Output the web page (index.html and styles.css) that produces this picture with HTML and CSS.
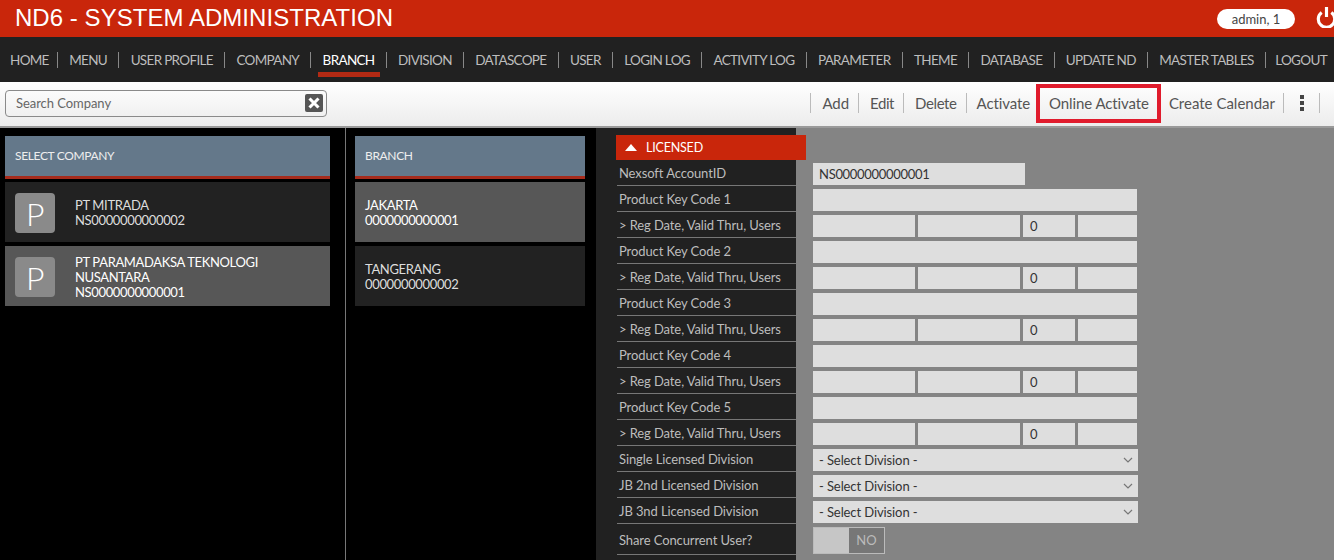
FILE: index.html
```html
<!DOCTYPE html>
<html lang="en">
<head>
    <meta charset="UTF-8">
    <meta name="viewport" content="width=device-width, initial-scale=1.0">
    <title>ND6 - System Administration</title>
    <link rel="stylesheet" href="styles.css">
</head>
<body>
    <header class="topbar">
        <h1 class="app-title">ND6 - SYSTEM ADMINISTRATION</h1>
        <span class="user-pill">admin, 1</span>
        <svg class="power" viewBox="0 0 20 20" width="21" height="21"><path d="M5.4 5.2a7.8 7.8 0 1 0 9.2 0" fill="none" stroke="#fff" stroke-width="3"/><path d="M10 0v9.5" fill="none" stroke="#fff" stroke-width="3"/></svg>
    </header>

    <nav class="mainnav">
        <a>HOME</a>
        <a>MENU</a>
        <a>USER PROFILE</a>
        <a>COMPANY</a>
        <a class="active">BRANCH</a>
        <a>DIVISION</a>
        <a>DATASCOPE</a>
        <a>USER</a>
        <a>LOGIN LOG</a>
        <a>ACTIVITY LOG</a>
        <a>PARAMETER</a>
        <a>THEME</a>
        <a>DATABASE</a>
        <a>UPDATE ND</a>
        <a>MASTER TABLES</a>
        <a>LOGOUT</a>
    </nav>

    <div class="toolbar">
        <div class="search">
            <span>Search Company</span>
            <svg class="search-clear" viewBox="0 0 14 14" width="18" height="18"><rect width="14" height="14" rx="1.5" fill="#555"/><path d="M3.5 3.5l7 7M10.5 3.5l-7 7" stroke="#fff" stroke-width="2.4"/></svg>
        </div>
        <div class="actions">
            <a>Add</a>
            <a class="tight">Edit</a>
            <a class="tight">Delete</a>
            <a class="activate">Activate</a>
            <a class="highlight">Online Activate</a>
            <a>Create Calendar</a>
            <a class="more"><i></i><i></i><i></i></a>
        </div>
    </div>

    <main class="content">
        <section class="col-company">
            <div class="list-head">SELECT COMPANY</div>
            <div class="list-item">
                <span class="avatar">P</span>
                <div>PT MITRADA<br>NS0000000000002</div>
            </div>
            <div class="list-item selected">
                <span class="avatar">P</span>
                <div>PT PARAMADAKSA TEKNOLOGI<br>NUSANTARA<br>NS0000000000001</div>
            </div>
        </section>

        <section class="col-branch">
            <div class="list-head">BRANCH</div>
            <div class="list-item selected">
                <div>JAKARTA<br>0000000000001</div>
            </div>
            <div class="list-item">
                <div>TANGERANG<br>0000000000002</div>
            </div>
        </section>

        <section class="col-form">
            <div class="form-labels">
                <div class="licensed"><span class="arrow"></span>LICENSED</div>
                <div class="label">Nexsoft AccountID</div>
                <div class="label">Product Key Code 1</div>
                <div class="label">&gt; Reg Date, Valid Thru, Users</div>
                <div class="label">Product Key Code 2</div>
                <div class="label">&gt; Reg Date, Valid Thru, Users</div>
                <div class="label">Product Key Code 3</div>
                <div class="label">&gt; Reg Date, Valid Thru, Users</div>
                <div class="label">Product Key Code 4</div>
                <div class="label">&gt; Reg Date, Valid Thru, Users</div>
                <div class="label">Product Key Code 5</div>
                <div class="label">&gt; Reg Date, Valid Thru, Users</div>
                <div class="label">Single Licensed Division</div>
                <div class="label">JB 2nd Licensed Division</div>
                <div class="label">JB 3nd Licensed Division</div>
                <div class="label label-tall">Share Concurrent User?</div>
            </div>
            <div class="form-fields">
                <div class="row"><div class="field account">NS0000000000001</div></div>
                <div class="row"><div class="field wide"></div></div>
                <div class="row"><div class="field date"></div><div class="field date"></div><div class="field users">0</div><div class="field extra"></div></div>
                <div class="row"><div class="field wide"></div></div>
                <div class="row"><div class="field date"></div><div class="field date"></div><div class="field users">0</div><div class="field extra"></div></div>
                <div class="row"><div class="field wide"></div></div>
                <div class="row"><div class="field date"></div><div class="field date"></div><div class="field users">0</div><div class="field extra"></div></div>
                <div class="row"><div class="field wide"></div></div>
                <div class="row"><div class="field date"></div><div class="field date"></div><div class="field users">0</div><div class="field extra"></div></div>
                <div class="row"><div class="field wide"></div></div>
                <div class="row"><div class="field date"></div><div class="field date"></div><div class="field users">0</div><div class="field extra"></div></div>
                <div class="row"><div class="field select">- Select Division -<svg viewBox="0 0 10 6" width="10" height="6"><path d="M1 1l4 4 4-4" fill="none" stroke="#777" stroke-width="1.2"/></svg></div></div>
                <div class="row"><div class="field select">- Select Division -<svg viewBox="0 0 10 6" width="10" height="6"><path d="M1 1l4 4 4-4" fill="none" stroke="#777" stroke-width="1.2"/></svg></div></div>
                <div class="row"><div class="field select">- Select Division -<svg viewBox="0 0 10 6" width="10" height="6"><path d="M1 1l4 4 4-4" fill="none" stroke="#777" stroke-width="1.2"/></svg></div></div>
                <div class="row"><div class="toggle"><span class="toggle-off"></span><span class="toggle-no">NO</span></div></div>
            </div>
        </section>
    </main>
</body>
</html>
```

FILE: styles.css
```css
* {
    margin: 0;
    padding: 0;
    box-sizing: border-box;
}

html, body {
    height: 560px;
    overflow: hidden;
}

body {
    background: #000;
    font-family: "Lato", "Liberation Sans", sans-serif;
    font-size: 14px;
    display: flex;
    flex-direction: column;
}

/* barra vermelha */
.topbar {
    height: 37px;
    background: #c9260b;
    display: flex;
    align-items: center;
    padding: 0 0 0 15px;
    flex-shrink: 0;
    overflow: hidden;
}

.app-title {
    font-family: "Liberation Sans", sans-serif;
    font-size: 24px;
    font-weight: 400;
    letter-spacing: 0.04px;
    color: #fff;
    flex: 1;
    padding-bottom: 2px;
}

.user-pill {
    width: 78px;
    height: 20px;
    border-radius: 10px;
    background: #fff;
    color: #444;
    font-size: 13px;
    text-align: center;
    line-height: 20px;
}

.power {
    margin: -2px -3px 0 21px;
    flex-shrink: 0;
}

/* menu principal */
.mainnav {
    height: 45px;
    background: #212121;
    display: flex;
    align-items: center;
    padding: 0 7px 0 10px;
    flex-shrink: 0;
}

.mainnav a {
    flex: 1 1 auto;
    text-align: center;
    color: #bdbdbd;
    font-size: 13.5px;
    letter-spacing: -0.68px;
    position: relative;
    line-height: 16px;
    white-space: nowrap;
}

.mainnav a:first-child {
    flex: 0 0 47px;
    text-align: left;
}

.mainnav a:last-child {
    flex: 0 0 62px;
    text-align: right;
}

.mainnav a + a {
    border-left: 1px solid #888;
}

.mainnav a.active {
    color: #fff;
}

.mainnav a.active::after {
    content: "";
    position: absolute;
    left: 7px;
    right: 6px;
    top: 20px;
    height: 5px;
    background: #b32a14;
}

/* toolbar */
.toolbar {
    height: 46px;
    background: linear-gradient(#fff, #ececec);
    display: flex;
    align-items: center;
    justify-content: space-between;
    padding: 0 0 2px 5px;
    flex-shrink: 0;
    border-bottom: 2px solid #9a9a9a;
}

.search {
    width: 322px;
    height: 27px;
    border: 1px solid #8a8a8a;
    border-radius: 4px;
    display: flex;
    align-items: center;
    justify-content: space-between;
    padding: 0 3px 0 10px;
    color: #666;
    font-size: 13px;
    letter-spacing: -0.05px;
}

.actions {
    display: flex;
    align-items: center;
    margin-right: 14px;
}

.actions a {
    color: #555;
    font-size: 15px;
    letter-spacing: -0.1px;
    line-height: 20px;
    height: 20px;
    padding: 0 9px 0 11px;
    border-left: 1px solid #bbb;
    white-space: nowrap;
}

.actions a.tight {
    letter-spacing: -0.4px;
}

.actions a.activate {
    padding-left: 10px;
}

.actions .highlight {
    border: 4px solid #e01b2c;
    height: 39px;
    line-height: 31px;
    padding: 0 8px 0 9px;
    margin: 0 8px 0 -3px;
}

.actions .highlight + a {
    border-left: 0;
    letter-spacing: 0;
    padding: 0 8px 0 0;
}

.actions .more {
    display: flex;
    flex-direction: column;
    align-items: center;
    justify-content: center;
    gap: 2px;
    width: 37px;
    border-right: 1px solid #bbb;
    padding: 0;
}

.more i {
    width: 4px;
    height: 4px;
    background: #444;
}

/* colunas */
.content {
    flex: 1;
    display: flex;
    min-height: 0;
}

.col-company {
    width: 346px;
    padding: 8px 15px 0 5px;
    border-right: 1px solid #777;
}

.col-branch {
    width: 250px;
    padding: 8px 11px 0 9px;
}

.list-head {
    height: 43px;
    background: #64788a;
    border-bottom: 3px solid #a62b1c;
    color: #eee;
    font-size: 12px;
    letter-spacing: -0.35px;
    display: flex;
    align-items: center;
    padding: 0 0 2px 10px;
    margin-bottom: 3px;
}

.list-item {
    height: 60px;
    background: #222;
    color: #ddd;
    font-size: 13px;
    line-height: 15px;
    letter-spacing: -0.35px;
    display: flex;
    align-items: center;
    margin-bottom: 4px;
    padding: 2px 0 0 10px;
}

.list-item.selected {
    background: #575757;
    color: #fff;
}

.avatar {
    width: 40px;
    height: 40px;
    border-radius: 4px;
    background: #8a8a8a;
    color: #fff;
    font-size: 32px;
    font-weight: 300;
    display: flex;
    align-items: center;
    justify-content: center;
    margin-right: 20px;
    flex-shrink: 0;
}

/* formulario */
.col-form {
    flex: 1;
    display: flex;
    background: #848484;
    min-width: 0;
}

.form-labels {
    width: 200px;
    flex-shrink: 0;
    background: #212121;
    padding: 7px 0 0 21px;
}

.licensed {
    width: 190px;
    height: 25px;
    margin-left: -1px;
    background: #c9260b;
    color: #fff;
    font-size: 12.5px;
    letter-spacing: -0.2px;
    display: flex;
    align-items: center;
    position: relative;
    z-index: 1;
}

.arrow {
    width: 0;
    height: 0;
    border-left: 6px solid transparent;
    border-right: 6px solid transparent;
    border-bottom: 7px solid #fff;
    margin: 0 9px 0 9px;
}

.label {
    height: 26px;
    padding-left: 2px;
    color: #bdbdbd;
    font-size: 13px;
    letter-spacing: -0.1px;
    line-height: 27px;
    border-bottom: 1px solid #777;
    white-space: nowrap;
}

.label-tall {
    height: 31px;
    line-height: 33px;
}

.form-fields {
    padding: 35px 0 0 17px;
}

.row {
    display: flex;
    gap: 3px;
    height: 26px;
}

.field {
    height: 22px;
    background: #dedede;
    color: #333;
    font-size: 13px;
    letter-spacing: -0.3px;
    line-height: 22px;
    padding-left: 6px;
}

.account {
    width: 212px;
}

.wide {
    width: 324px;
}

.date {
    width: 102px;
}

.users {
    width: 52px;
    padding-left: 7px;
}

.extra {
    width: 59px;
}

.select {
    width: 325px;
    display: flex;
    align-items: center;
    justify-content: space-between;
    padding-right: 5px;
    letter-spacing: -0.1px;
}

.toggle {
    width: 72px;
    height: 27px;
    border: 1px solid #bbb;
    display: flex;
}

.toggle-off {
    width: 35px;
    background: #c6c6c6;
}

.toggle-no {
    flex: 1;
    background: #777;
    color: #bbb;
    font-size: 13px;
    text-align: center;
    line-height: 25px;
}
```
